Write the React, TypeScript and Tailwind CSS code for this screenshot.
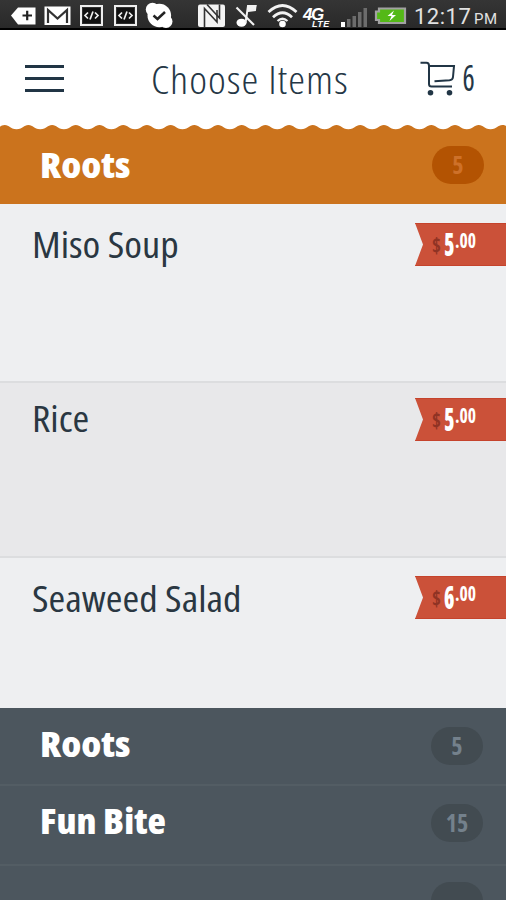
import React from "react";

interface PillProps {
  count: string;
  className: string;
}

interface Item {
  name: string;
  dollars: string;
  row: string;
  label: string;
}

interface Category {
  name: string;
  count: string;
  row: string;
  label: string;
}

const items: Item[] = [
  {
    name: "Miso Soup",
    dollars: "5",
    row: "h-[177px] pt-[19px] bg-[#eeeff1]",
    label: "-mt-px",
  },
  {
    name: "Rice",
    dollars: "5",
    row: "h-[175px] pt-[15px] bg-[#e8e8ea] border-t-2 border-[#dcdddf]",
    label: "-mt-[2px]",
  },
  {
    name: "Seaweed Salad",
    dollars: "6",
    row: "h-[152px] pt-[18px] bg-[#eeeff1] border-t-2 border-[#dcdddf]",
    label: "mt-0",
  },
];

const categories: Category[] = [
  { name: "Roots", count: "5", row: "h-[76px] pt-[19px]", label: "scale-x-[1.08]" },
  {
    name: "Fun Bite",
    count: "15",
    row: "h-[80px] pt-[18px] border-t-2 border-[#535d64]",
    label: "scale-x-[1.05]",
  },
  {
    name: "",
    count: "",
    row: "h-[36px] pt-[16px] border-t-2 border-[#535d64]",
    label: "",
  },
];

const WAVE = 23.7;

const wavePath = () => {
  let d = "M-19 0";
  for (let i = 0; i < 23; i++) {
    const x = -19 + i * WAVE;
    d += ` C${x + 5} 0 ${x + 5} 4.2 ${x + WAVE / 2} 4.2`;
    d += ` S${x + WAVE - 5} 0 ${x + WAVE} 0`;
  }
  return d + " V6 H-19 Z";
};

const StatusBar = () => (
  <div className="flex h-[30px] w-full items-start border-b-2 border-black bg-gradient-to-b from-[#353535] to-[#292929]">
    <svg className="h-[28px] w-[303px] shrink-0" viewBox="0 0 303 28" fill="none">
      <path d="M11 15.500 18 7.500h17.500v17H18Z" fill="#fff" />
      <path d="M22.500 15.500h9.500M27.200 10.800v9.500" stroke="#222" strokeWidth="2.200" />
      <rect x="44.500" y="6.500" width="26" height="18.500" fill="#fff" />
      <path d="M48 23V10l9.500 8.500L67 10v13" stroke="#333" strokeWidth="2.200" />
      {[80, 114].map((x) => (
        <g key={x} stroke="#eee">
          <rect x={x + 1} y="6" width="21" height="19" strokeWidth="2" />
          <rect x={x + 3} y="8" width="17" height="15" stroke="none" fill="#111" />
          <path
            d={`M${x + 8} 12.500l-3 3 3 3M${x + 15} 12.500l3 3-3 3M${x + 13} 11.500l-3 8`}
            strokeWidth="1.700"
          />
        </g>
      ))}
      <circle cx="159.300" cy="15.500" r="11.800" fill="#fff" />
      <circle cx="152.500" cy="9.500" r="6.700" fill="#fff" />
      <circle cx="166" cy="21.500" r="6.500" fill="#fff" />
      <path d="m153.500 15.500 4 3.500 7.500-7" stroke="#222" strokeWidth="2.500" />
      <rect x="198" y="4.500" width="27" height="22.500" rx="2" fill="#f4f4f4" />
      <path d="M204.500 27V8.500L217 22V10" stroke="#333" strokeWidth="1.600" />
      <path d="M207 4.500 219.500 18V4.500" stroke="#333" strokeWidth="1.600" />
      <ellipse cx="241.500" cy="22.700" rx="5" ry="4" fill="#fff" />
      <path d="M245.500 23 248 6h7.500l-.5 4-7 1" stroke="#f2f2f2" strokeWidth="2" />
      <path d="M247.500 5h9l-1 4.500-8 1.500Z" fill="#f2f2f2" />
      <path d="M236.500 7.500 254 25" stroke="#f2f2f2" strokeWidth="2.200" />
      <path d="M268.500 12q14-13 28 0M273 17.200q9.500-9 19 0" stroke="#f2f2f2" strokeWidth="2.800" />
      <path d="M277.500 21q5-4.500 10 0" stroke="#f2f2f2" strokeWidth="2.200" />
      <circle cx="282.500" cy="24" r="3.300" fill="#fff" />
    </svg>
    <div className="flex w-[38px] shrink-0 flex-col pt-[9px] font-['Liberation_Sans'] font-bold italic text-white">
      <span className="h-[11px] text-[17px] leading-[11px] tracking-[-1.5px]">4G</span>
      <span className="h-[8px] pl-[9px] text-[9px] leading-[8px] tracking-[0.5px]">LTE</span>
    </div>
    <svg className="h-[28px] w-[67px] shrink-0" viewBox="341 0 67 28" fill="none">
      <path d="M341 22h4v5h-4Z" fill="#fff" />
      <path d="M347 19h3.500v8H347ZM352.500 16h3.500v11h-3.500ZM358 12h3.500v15H358ZM363.500 8h3.500v19h-3.500Z" fill="#6c6c6c" />
      <path d="M379 8.500h26v14.500h-26v-3h-3v-8.500h3Z" fill="#54b917" stroke="#a2a2a2" strokeWidth="2.200" />
      <path d="m394 10.500-6.500 5.500h4l-2 5 6.500-6h-4Z" fill="#fff" />
    </svg>
    <div className="flex items-baseline pl-[6px] pt-[3px] font-['Roboto',sans-serif] text-[#e2e2e2] [font-stretch:100%]">
      <span className="w-[60px] text-[22px] leading-7 tracking-[0.5px]">12:17</span>
      <span className="text-[15px] leading-[25px] tracking-[0.5px]">PM</span>
    </div>
  </div>
);

const Header = () => (
  <header className="flex h-[95px] items-start bg-white pl-[25px] text-[#253746]">
    <div className="mt-[35px] flex w-[126px] flex-col gap-[9px]">
      <span className="h-[3px] w-[39px] bg-[#213545]" />
      <span className="h-[3px] w-[39px] bg-[#213545]" />
      <span className="h-[3px] w-[39px] bg-[#213545]" />
    </div>
    <h1 className="mt-[29px] w-[269px] origin-left scale-x-[1.09] whitespace-nowrap text-[39px] font-[340] leading-[40px] tracking-[0.9px]">
      Choose Items
    </h1>
    <svg className="mt-[30px] h-[38px] w-[36px]" viewBox="420 60 36 38" fill="none" stroke="#213545" strokeWidth="2">
      <path d="M420.500 62.700h6q2.500 0 2.500 3V84q0 2.500 2.500 2.500H452" />
      <path d="M429 66h25l-1 11q-.3 3-3.500 3.300L434.500 81.300" />
      <circle cx="430.500" cy="92.700" r="2.800" fill="#213545" stroke="none" />
      <circle cx="449.500" cy="92.700" r="2.800" fill="#213545" stroke="none" />
    </svg>
    <span className="mt-[28px] origin-left scale-x-[0.8] pl-[8px] text-[36px] font-medium leading-[40px]">6</span>
  </header>
);

const Pill = ({ count, className }: PillProps) => (
  <span
    className={`flex h-[38px] w-[52px] shrink-0 items-center justify-center rounded-full text-[24px] font-bold ${className}`}
  >
    {count}
  </span>
);

const PriceTag = ({ dollars }: { dollars: string }) => (
  <div className="flex h-[43px] w-[91px] items-start border-y border-[#c5432c] bg-[#cb5139] pl-[17px] [clip-path:polygon(0_0,100%_0,100%_100%,0_100%,8px_50%)]">
    <span className="mt-[10px] w-[12px] origin-left scale-x-90 text-[21px] font-bold leading-[22px] text-[#8f3324]">$</span>
    <span className="mt-[4px] w-[11px] origin-left scale-x-[0.68] text-[31px] font-extrabold leading-[32px] text-white">
      {dollars}
    </span>
    <span className="mt-[4px] origin-left scale-x-[0.8] text-[22px] font-bold leading-[22px] text-white">.00</span>
  </div>
);

export default function App() {
  return (
    <div className="h-[900px] w-[506px] overflow-hidden bg-[#4c565e] font-['Open_Sans','Noto_Sans',sans-serif] [font-stretch:75%]">
      <StatusBar />
      <Header />
      <svg className="block h-[5px] w-full bg-white" viewBox="0 0 506 5">
        <path d={wavePath()} fill="#cb731d" />
      </svg>
      <div className="flex h-[74px] justify-between bg-[#cb731d] pl-[40px] pr-[22px] pt-[16px]">
        <h2 className="-mt-px origin-left scale-x-[1.08] text-[36px] font-extrabold leading-[40px] text-white">Roots</h2>
        <Pill count="5" className="bg-[#b35302] text-[#ce7129]" />
      </div>
      {items.map((item) => (
        <div key={item.name} className={`flex justify-between pl-[32px] ${item.row}`}>
          <h3
            className={`origin-left scale-x-[1.09] whitespace-nowrap text-[37px] font-medium leading-[44px] text-[#2a3742] ${item.label}`}
          >
            {item.name}
          </h3>
          <PriceTag dollars={item.dollars} />
        </div>
      ))}
      {categories.map((category, i) => (
        <div key={i} className={`flex justify-between pl-[40px] pr-[23px] ${category.row}`}>
          <h2 className={`origin-left text-[36px] font-extrabold leading-[34px] text-white ${category.label}`}>
            {category.name}
          </h2>
          <Pill count={category.count} className="bg-[#424b51] text-[#74818c]" />
        </div>
      ))}
    </div>
  );
}
